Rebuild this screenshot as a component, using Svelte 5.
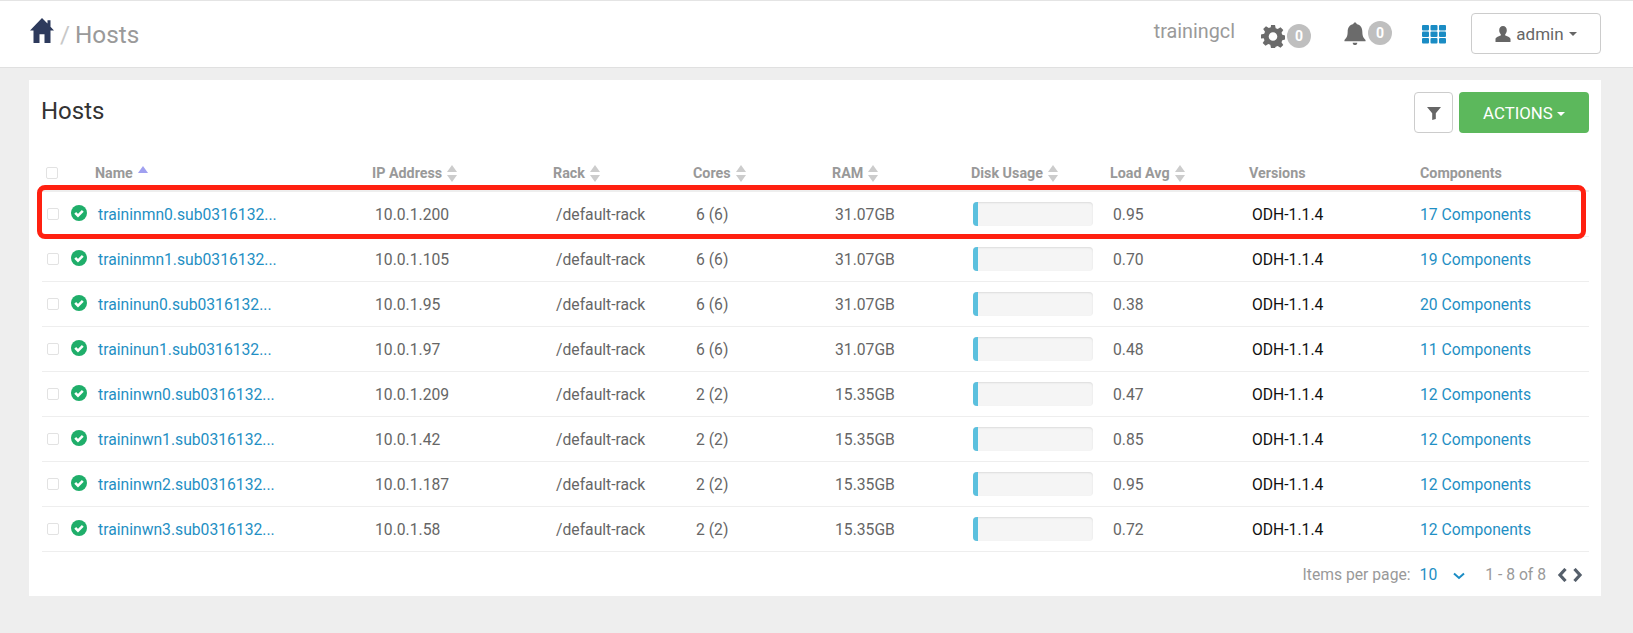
<script>
  const hosts = [
    { name: "traininmn0.sub0316132...", ip: "10.0.1.200", cores: "6 (6)", ram: "31.07GB", load: "0.95", comps: "17 Components" },
    { name: "traininmn1.sub0316132...", ip: "10.0.1.105", cores: "6 (6)", ram: "31.07GB", load: "0.70", comps: "19 Components" },
    { name: "traininun0.sub0316132...", ip: "10.0.1.95", cores: "6 (6)", ram: "31.07GB", load: "0.38", comps: "20 Components" },
    { name: "traininun1.sub0316132...", ip: "10.0.1.97", cores: "6 (6)", ram: "31.07GB", load: "0.48", comps: "11 Components" },
    { name: "traininwn0.sub0316132...", ip: "10.0.1.209", cores: "2 (2)", ram: "15.35GB", load: "0.47", comps: "12 Components" },
    { name: "traininwn1.sub0316132...", ip: "10.0.1.42", cores: "2 (2)", ram: "15.35GB", load: "0.85", comps: "12 Components" },
    { name: "traininwn2.sub0316132...", ip: "10.0.1.187", cores: "2 (2)", ram: "15.35GB", load: "0.95", comps: "12 Components" },
    { name: "traininwn3.sub0316132...", ip: "10.0.1.58", cores: "2 (2)", ram: "15.35GB", load: "0.72", comps: "12 Components" },
  ];
  const sortable = [
    ["IP Address", 1], ["Rack", 1], ["Cores", 1], ["RAM", 1], ["Disk Usage", 1], ["Load Avg", 1], ["Versions", 0], ["Components", 0],
  ];
</script>

<div class="page">
  <header class="topbar">
    <div class="crumbs">
      <svg class="home" viewBox="0 1 26 23" width="26" height="25" preserveAspectRatio="none">
        <path d="M13 1 L1 12.5 L4.5 12.5 L4.5 24 L10.5 24 L10.5 16 L15.5 16 L15.5 24 L21.5 24 L21.5 12.5 L25 12.5 L21.5 9 L21.5 3 L18.500 3 L18.500 6 Z" fill="#2d3a5c" />
      </svg>
      <span class="slash">/</span>
      <span class="crumb">Hosts</span>
    </div>
    <div class="tools">
      <span class="cluster">trainingcl</span>
      <span class="tool gear">
        <svg viewBox="0 0 24 24" width="24" height="24">
          <path fill-rule="evenodd" fill="#6b6b6b" d="M10 1h4l.7 3.2 2 .8 2.8-1.8 2.8 2.8-1.8 2.8.8 2 3.2.7v4l-3.2.7-.8 2 1.8 2.8-2.8 2.8-2.8-1.8-2 .8L14 24h-4l-.7-3.2-2-.8-2.8 1.8-2.8-2.8 1.8-2.8-.8-2L0 14.500v-4l3.2-.7.8-2L2.200 5 5 2.200 7.800 4l2-.8zM12 8.200a4.300 4.300 0 1 0 0 8.600 4.300 4.300 0 0 0 0-8.600z" />
        </svg>
        <span class="count">0</span>
      </span>
      <span class="tool bell">
        <svg viewBox="0 0 24 26" width="22" height="25">
          <path fill="#6b6b6b" d="M12 1c1 0 1.800.7 1.800 1.700C18 3.600 20 7 20 11c0 5 1.500 7 3.500 9v1.500H.5V20c2-2 3.500-4 3.500-9 0-4 2-7.400 6.200-8.300C10.200 1.700 11 1 12 1zM9.500 23h5c0 1.500-1 2.600-2.500 2.600S9.500 24.500 9.500 23z" />
        </svg>
        <span class="count">0</span>
      </span>
      <svg class="grid-icon" viewBox="0 0 24 19" width="24" height="19">
        {#each [0, 6.5, 13] as y}
          {#each [0, 8.5, 17] as x}
            <rect {x} {y} width="7" height="5.500" rx="1" fill="#1a8cc4" />
          {/each}
        {/each}
      </svg>
      <button class="user">
        <svg viewBox="0 0 16 16" width="16" height="16">
          <path fill="#666" d="M8 0c2.300 0 3.800 1.700 3.800 4.200 0 1.600-.7 3.100-1.600 4v1.300c2.400.8 5.300 1.800 5.300 3.700V16H.5v-2.800c0-1.900 2.900-2.900 5.300-3.700V8.200c-.9-.9-1.600-2.400-1.600-4C4.200 1.700 5.700 0 8 0z" />
        </svg>
        <span>admin</span>
        <i class="caret"></i>
      </button>
    </div>
  </header>

  <main class="card">
    <div class="card-head">
      <h1>Hosts</h1>
      <div class="actions">
        <button class="filter" aria-label="Filter">
          <svg viewBox="0 0 14 14" width="14" height="14"><path fill="#666" d="M0 1h14L8.800 7.300V13L5.200 14V7.300z" /></svg>
        </button>
        <button class="primary">ACTIONS <i class="caret"></i></button>
      </div>
    </div>

    <div class="table">
      <div class="row head">
        <span class="box"></span>
        <span class="cell name-head">Name <i class="asc"></i></span>
        {#each sortable as [label, sorts]}
          <span class="cell">
            {label}
            {#if sorts}<i class="sort"></i>{/if}
          </span>
        {/each}
      </div>

      {#each hosts as h}
        <div class="row">
          <span class="box"></span>
          <span class="cell name">
            <svg class="ok" viewBox="0 0 16 16" width="16" height="16">
              <circle cx="8" cy="8" r="8" fill="#1fae6a" />
              <path d="M4.200 7.800 L7 10.600 L11.800 5.900" fill="none" stroke="#fff" stroke-width="2.600" />
            </svg>
            <a href="#top">{h.name}</a>
          </span>
          <span class="cell">{h.ip}</span>
          <span class="cell">/default-rack</span>
          <span class="cell">{h.cores}</span>
          <span class="cell">{h.ram}</span>
          <span class="cell"><span class="bar"><span class="fill"></span></span></span>
          <span class="cell">{h.load}</span>
          <span class="cell ver">ODH-1.1.4</span>
          <span class="cell comps"><a href="#top">{h.comps}</a></span>
        </div>
      {/each}

      <div class="highlight"></div>
    </div>

    <footer class="pager">
      <span>Items per page:</span>
      <span class="size">10</span>
      <svg class="chev" viewBox="0 0 12 8" width="12" height="8"><path d="M1 1.500 L6 6 L11 1.500" fill="none" stroke="#1a8cc4" stroke-width="2" /></svg>
      <span class="range">1 - 8 of 8</span>
      <svg viewBox="0 0 26 14" width="26" height="14">
        <path d="M8.500 1 L3 7 L8.500 13 M17.500 1 L23 7 L17.500 13" fill="none" stroke="#555f6b" stroke-width="3.200" />
      </svg>
    </footer>
  </main>
</div>

<style>
  :global(body) {
    margin: 0;
    background: #eeeeee;
    font-family: Roboto, "Liberation Sans", sans-serif;
  }
  .page {
    min-height: 633px;
    background: #eee;
  }
  .topbar {
    height: 68px;
    box-sizing: border-box;
    border-top: 1px solid #e4e4e4;
    border-bottom: 1px solid #e0e0e0;
    background: #fff;
    display: flex;
    align-items: center;
    justify-content: space-between;
    padding: 0 32px 0 29px;
  }
  .crumbs {
    display: flex;
    align-items: center;
    font-size: 24.3px;
    color: #9a9a9a;
  }
  .home {
    margin: -8px 0 0 0;
  }
  .slash {
    margin: 0 5px;
    color: #c8c8c8;
  }
  .tools {
    display: flex;
    align-items: center;
  }
  .cluster {
    font-size: 19.8px;
    color: #9a9a9a;
    margin: -5px 26px 0 0;
  }
  .tool {
    display: flex;
    align-items: center;
    gap: 2px;
  }
  .gear {
    margin-right: 33px;
  }
  .gear svg {
    margin-top: 4px;
  }
  .bell {
    margin-right: 30px;
  }
  .bell svg {
    margin-top: -2px;
  }
  .bell .count {
    margin-top: -2px;
  }
  .count {
    width: 24px;
    height: 24px;
    border-radius: 50%;
    background: #bfbfbf;
    color: #fff;
    font-size: 14px;
    font-weight: 700;
    display: flex;
    align-items: center;
    justify-content: center;
  }
  .gear .count {
    margin-top: 3px;
  }
  .grid-icon {
    margin-right: 25px;
  }
  .user {
    width: 130px;
    height: 41px;
    margin-top: -1px;
    background: #fff;
    border: 1px solid #ccc;
    border-radius: 4px;
    display: flex;
    align-items: center;
    justify-content: center;
    gap: 5px;
    font: 17px Roboto, sans-serif;
    color: #666;
  }
  .caret {
    display: inline-block;
    width: 0;
    height: 0;
    border-top: 4px solid currentColor;
    border-left: 4px solid transparent;
    border-right: 4px solid transparent;
    vertical-align: middle;
  }
  .card {
    margin: 12px 32px 0 29px;
    height: 516px;
    box-sizing: border-box;
    background: #fff;
    padding: 12px 12px 0 13px;
    position: relative;
  }
  .card-head {
    display: flex;
    justify-content: space-between;
    height: 60px;
  }
  h1 {
    margin: 5px 0 0 -1px;
    font-size: 24px;
    font-weight: 400;
    color: #333;
  }
  .actions {
    display: flex;
    gap: 6px;
  }
  .filter {
    width: 39px;
    height: 41px;
    background: #fff;
    border: 1px solid #ccc;
    border-radius: 4px;
    padding: 0;
    display: flex;
    align-items: center;
    justify-content: center;
  }
  .primary {
    width: 130px;
    height: 41px;
    border: 0;
    border-radius: 4px;
    background: #5cb85c;
    color: #fff;
    font: 16.8px Roboto, sans-serif;
  }
  .table {
    position: relative;
  }
  .row {
    display: grid;
    grid-template-columns: 53px 277px 181px 140px 139px 139px 139px 139px 171px 1fr;
    align-items: center;
    height: 45px;
    box-sizing: border-box;
    border-bottom: 1px solid #eee;
    font-size: 15.7px;
    color: #666;
  }
  .row:last-of-type {
    border-bottom: 2px solid #eee;
  }
  .row.head {
    height: 40px;
    color: #999;
    font-size: 14.3px;
    font-weight: 700;
    border-bottom: 2px solid #eee;
    padding-top: 4px;
  }
  .head .cell {
    display: flex;
    align-items: center;
    gap: 5px;
  }
  .row:not(.head) .cell {
    padding-left: 3px;
  }
  .box {
    box-sizing: border-box;
    width: 12px;
    height: 12px;
    margin-left: 5px;
    border: 1px solid #e2e2e2;
    border-radius: 2px;
  }
  .head .box {
    margin-left: 4px;
  }
  .name {
    display: flex;
    align-items: center;
    gap: 11px;
    margin-left: -27px;
  }
  .ok {
    flex: none;
    margin-top: -3px;
  }
  a {
    color: #1f8fc4;
    text-decoration: none;
  }
  .asc {
    width: 0;
    height: 0;
    margin-top: -8px;
    border-bottom: 7px solid #a0a0f0;
    border-left: 5px solid transparent;
    border-right: 5px solid transparent;
  }
  .sort {
    position: relative;
    width: 10px;
    height: 17px;
  }
  .sort::before,
  .sort::after {
    content: "";
    position: absolute;
    left: 0;
    border-left: 5px solid transparent;
    border-right: 5px solid transparent;
  }
  .sort::before {
    top: 0;
    border-bottom: 7px solid #ccc;
  }
  .sort::after {
    bottom: 0;
    border-top: 7px solid #ccc;
  }
  .bar {
    display: block;
    width: 120px;
    height: 24px;
    margin-left: -1px;
    border-radius: 4px;
    background: #f5f5f5;
    box-shadow: inset 0 1px 2px rgba(0, 0, 0, 0.1);
    overflow: hidden;
  }
  .fill {
    display: block;
    width: 5px;
    height: 100%;
    background: #5bc0de;
  }
  .ver {
    color: #111;
  }
  .row:not(.head) .comps {
    padding-left: 0;
  }
  .highlight {
    position: absolute;
    left: -5px;
    right: 3px;
    top: 33px;
    height: 54px;
    box-sizing: border-box;
    border: 5px solid #ff2010;
    border-radius: 8px;
  }
  .pager {
    display: flex;
    justify-content: flex-end;
    align-items: center;
    height: 44px;
    padding: 1px 6px 0 0;
    box-sizing: border-box;
    font-size: 15.7px;
    color: #999;
  }
  .size {
    margin-left: 9px;
    color: #1f8fc4;
  }
  .chev {
    margin: 2px 0 0 16px;
  }
  .range {
    margin: 0 11px 0 20px;
  }
</style>
